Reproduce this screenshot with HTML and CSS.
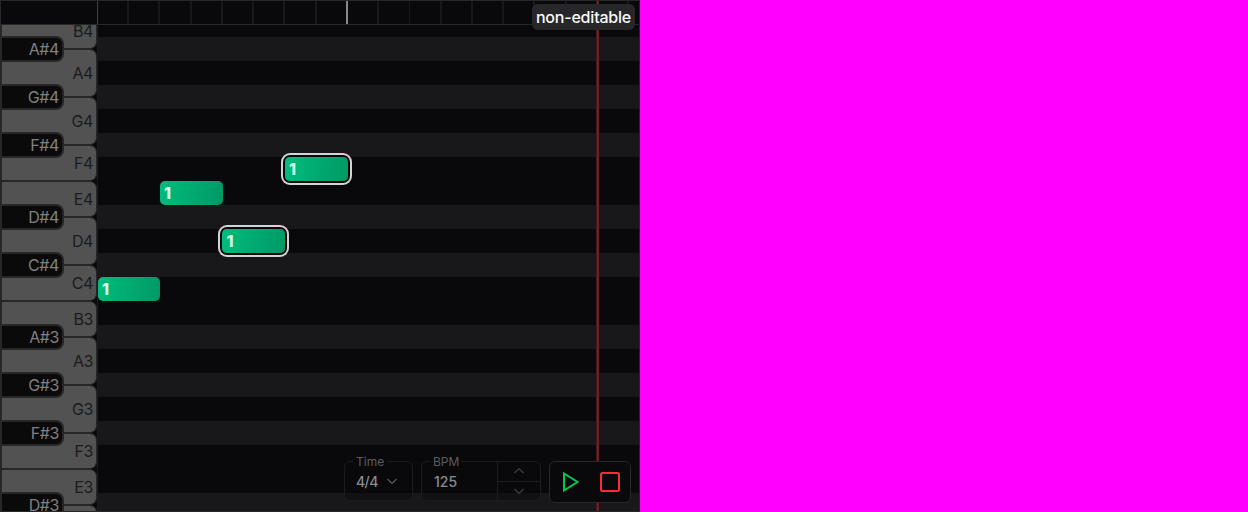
FILE: index.html
```
<!DOCTYPE html>
<html lang="en">
<head>
<meta charset="utf-8">
<title>Piano roll</title>
<link rel="stylesheet" href="styles.css">
</head>
<body>
<main class="editor">
  <header class="ruler">
    <div class="corner"></div>
    <div class="ticks"></div>
  </header>
  <div class="roll">
    <div class="keys">
      <div class="key short">B4<span class="sharp">A#4</span></div>
      <div class="key">A4<span class="sharp">G#4</span></div>
      <div class="key">G4<span class="sharp">F#4</span></div>
      <div class="key short">F4</div>
      <div class="key short">E4<span class="sharp">D#4</span></div>
      <div class="key">D4<span class="sharp">C#4</span></div>
      <div class="key short">C4</div>
      <div class="key short">B3<span class="sharp">A#3</span></div>
      <div class="key">A3<span class="sharp">G#3</span></div>
      <div class="key">G3<span class="sharp">F#3</span></div>
      <div class="key short">F3</div>
      <div class="key short">E3<span class="sharp">D#3</span></div>
      <div class="key"></div>
    </div>
    <div class="lanes">
      <div class="lane"></div><div class="lane dark"></div>
      <div class="lane"></div><div class="lane dark"></div>
      <div class="lane"></div><div class="lane dark"></div>
      <div class="lane"></div><div class="lane"></div><div class="lane dark"></div>
      <div class="lane"></div><div class="lane dark"></div>
      <div class="lane"></div><div class="lane"></div><div class="lane dark"></div>
      <div class="lane"></div><div class="lane dark"></div>
      <div class="lane"></div><div class="lane dark"></div>
      <div class="lane"></div><div class="lane"></div><div class="lane dark"></div>
      <div class="note n1">1</div>
      <div class="note n2">1</div>
      <div class="note n3 selected">1</div>
      <div class="note n4 selected">1</div>
    </div>
  </div>
  <div class="playhead"></div>
  <div class="badge">non-editable</div>
  <div class="controls">
    <div class="field time"><span class="caption">Time</span><span class="value">4/4</span>
      <svg class="chevron" width="14" height="14" viewBox="0 0 14 14"><path d="M2.5 5L7 9.5 11.5 5"/></svg>
    </div>
    <div class="field bpm"><span class="caption">BPM</span><span class="value">125</span>
      <div class="stepper">
        <div class="step"><svg width="14" height="14" viewBox="0 0 14 14"><path d="M2.5 9L7 4.5 11.5 9"/></svg></div>
        <div class="step"><svg width="14" height="14" viewBox="0 0 14 14"><path d="M2.5 5L7 9.5 11.5 5"/></svg></div>
      </div>
    </div>
    <div class="transport">
      <svg class="play" width="24" height="24" viewBox="0 0 24 24"><path d="M6 3.5v17L19.5 12z"/></svg>
      <svg class="stop" width="24" height="24" viewBox="0 0 24 24"><rect x="3" y="3" width="18" height="18" rx="1.5"/></svg>
    </div>
  </div>
</main>
</body>
</html>
```
FILE: styles.css
```
* { box-sizing: border-box; }
body {
  margin: 0;
  height: 512px;
  overflow: hidden;
  background: #ff00ff;
  font-family: Inter, "Liberation Sans", sans-serif;
}
.editor {
  position: relative;
  display: flex;
  flex-direction: column;
  width: 640px;
  height: 512px;
  overflow: hidden;
  border: 1px solid #27272a;
  background: #09090b;
}
.ruler {
  display: flex;
  flex: 0 0 24px;
  border-bottom: 1px solid #27272a;
}
.corner { width: 96px; }
.ticks {
  flex: 1;
  border-left: 1px solid #3f3f46;
  background:
    linear-gradient(#88888c, #88888c) 248px 0 / 2px 100% no-repeat,
    repeating-linear-gradient(90deg, transparent 0 29.25px, #18181b 29.25px 31.25px);
}
.roll { display: flex; flex: 1; min-height: 0; overflow: hidden; }
.keys {
  flex: 0 0 97px;
  overflow: hidden;
  border-left: 1px solid #27272a;
  border-right: 1px solid #1c1c1f;
  background: #09090b;
}
.key {
  position: relative;
  display: flex;
  align-items: center;
  justify-content: flex-end;
  height: 48px;
  padding-right: 3px;
  border: solid #27272a;
  border-width: 1px 1px 1px 0;
  border-radius: 0 7px 7px 0;
  background: #525252;
  color: #1b1b1d;
  font-size: 16px;
  line-height: 24px;
  letter-spacing: -0.4px;
}
.key:first-child { margin-top: -12px; }
.short { height: 36px; }
.sharp {
  position: absolute;
  z-index: 1;
  left: 0;
  bottom: -14px;
  width: 62px;
  height: 26px;
  padding-right: 3px;
  border: solid #27272a;
  border-width: 2px 2px 2px 0;
  border-radius: 0 8px 8px 0;
  background: #0a0a0a;
  color: #808080;
  line-height: 22px;
  text-align: right;
}
.lanes { position: relative; flex: 1; overflow: hidden; }
.lane { height: 24px; }
.lane:first-child { height: 12px; }
.dark { background: #18181b; }
.note {
  position: absolute;
  width: 62.5px;
  height: 24px;
  padding-left: 4px;
  border-radius: 5px;
  background: linear-gradient(100deg, #00bc7d, #009966);
  color: #d0fae5;
  font-size: 16px;
  font-weight: 800;
  line-height: 24px;
}
.n1 { left: 0; top: 252px; width: 62px; }
.n2 { left: 62px; top: 156px; }
.n3 { left: 124.4px; top: 204px; }
.n4 { left: 187px; top: 132px; }
.selected { box-shadow: 0 0 0 2px #09090b, 0 0 0 4px #d4d4d8; }
.playhead {
  position: absolute;
  top: 0;
  bottom: 0;
  left: 595px;
  width: 3px;
  background: linear-gradient(90deg, #3f1516 0 1px, #872020 1px 2px, #681b1c 2px 3px);
}
.badge {
  position: absolute;
  top: 3px;
  right: 4px;
  width: 103px;
  height: 26px;
  border-radius: 6px;
  background: #27272a;
  color: #fafafa;
  font-size: 16px;
  font-weight: 500;
  line-height: 26px;
  letter-spacing: -0.2px;
  text-align: center;
}
.controls {
  position: absolute;
  right: 8px;
  bottom: 8px;
  display: flex;
  gap: 8px;
}
.field {
  position: relative;
  display: flex;
  align-items: center;
  height: 40px;
  border: 1px solid #1c1c1f;
  border-radius: 6px;
  background: rgba(9, 9, 11, 0.5);
  color: #8c8c90;
  font-size: 14px;
  font-weight: 500;
}
.caption {
  position: absolute;
  left: 8px;
  top: -8px;
  padding: 0 3px;
  background: #09090b;
  color: #5c5c61;
  font-size: 12px;
  font-weight: 400;
  line-height: 16px;
}
.time { width: 69px; padding-left: 11px; gap: 7px; }
.time .value { letter-spacing: -0.6px; }
.bpm { width: 120px; padding-left: 12px; }
.stepper {
  display: flex;
  flex-direction: column;
  width: 43px;
  height: 38px;
  margin-left: auto;
  border-left: 1px solid #1c1c1f;
}
.step { display: flex; flex: 1; align-items: center; justify-content: center; }
.step + .step { border-top: 1px solid #1c1c1f; }
.field svg { fill: none; stroke: #3f3f43; stroke-width: 1.2; }
.field .chevron { stroke: #5c5c60; }
.transport {
  display: flex;
  align-items: center;
  justify-content: space-between;
  width: 82px;
  height: 42px;
  padding: 0 8px;
  border: 1px solid #27272a;
  border-radius: 6px;
  background: #09090b;
}
.transport svg { fill: none; stroke-width: 2; }
.play { stroke: #00c951; }
.stop { stroke: #fb2c36; }
```
